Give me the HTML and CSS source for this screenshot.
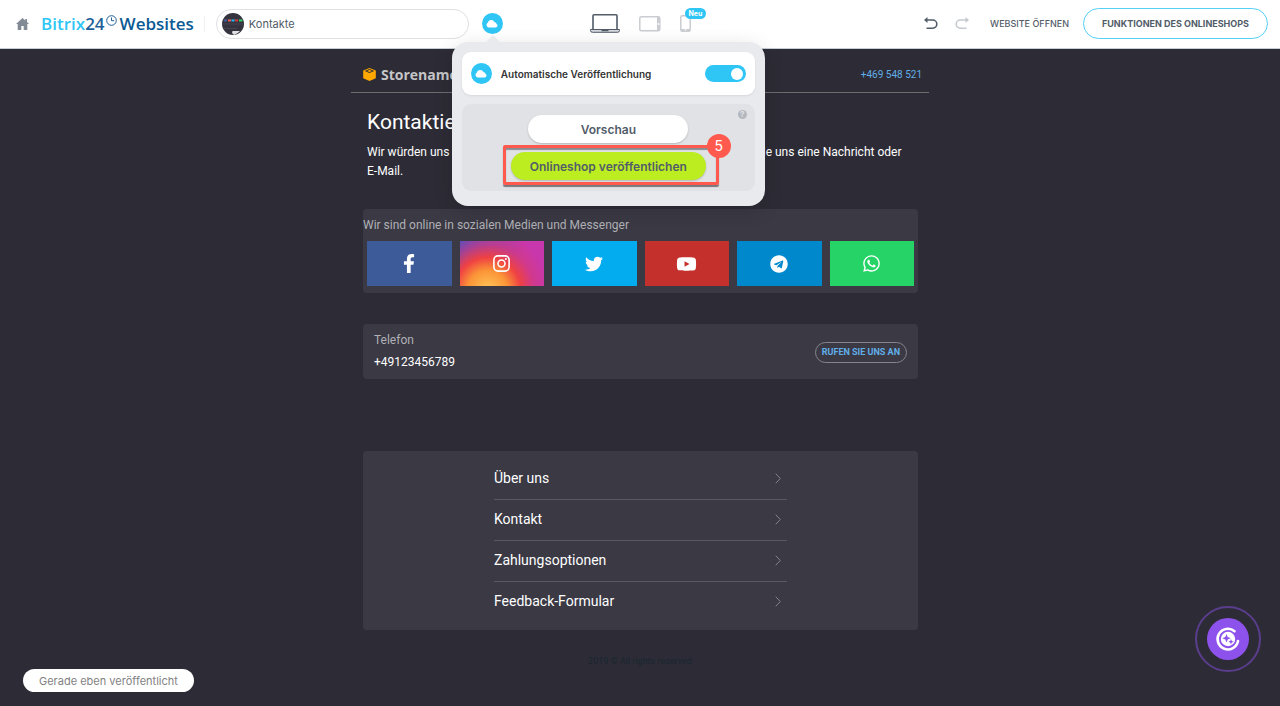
FILE: index.html
```html
<!DOCTYPE html>
<html lang="de">
<head>
  <meta charset="UTF-8">
  <meta name="viewport" content="width=device-width, initial-scale=1">
  <title>Bitrix24 Websites</title>
  <link rel="stylesheet" href="styles.css">
</head>
<body>

  <!-- Editor toolbar -->
  <header class="toolbar">
    <div class="toolbar-left">
      <a href="#" class="home" aria-label="Startseite">
        <svg width="13" height="12" viewBox="0 0 13 12"><path fill="#828b95" d="M6.500 0 0 6h1.700v6h3.600V8h2.400v4h3.600V6H13L11 4.100V1H9.300v1.600z"/></svg>
      </a>
      <a href="#" class="logo">
        <span class="logo-name">Bitrix</span><span class="logo-num">24</span>
        <svg class="logo-clock" width="11" height="11" viewBox="0 0 11 11" fill="none" stroke="#215f98" stroke-width="1"><circle cx="5.500" cy="5.500" r="4.800"/><path d="M5.500 2.500v3.200h2.700"/></svg>
        <span class="logo-product">Websites</span>
      </a>
      <span class="divider"></span>
      <button type="button" class="page-select">
        <svg width="22" height="22" viewBox="0 0 22 22">
          <circle cx="11" cy="11" r="11" fill="#34333e"/>
          <path d="M1 6.500h20M0 11h22M1 15.500h14" stroke="#454450"/>
          <path d="M2 7.500h3" stroke="#3f5a9c" stroke-width="2"/>
          <path d="M6 7.500h3" stroke="#ee5a4f" stroke-width="2"/>
          <path d="M9.500 7.500h3" stroke="#1fb4f3" stroke-width="2"/>
          <path d="M13 7.500h3" stroke="#d23a37" stroke-width="2"/>
          <path d="M17 7.500h3.400" stroke="#2bcf67" stroke-width="2"/>
          <path d="M10.500 18h7.500a11 11 0 0 1-6 3.900l-2-2z" fill="#dfe0e3"/>
        </svg>
        <span>Kontakte</span>
      </button>

      <div class="publish">
        <button type="button" class="cloud" aria-label="Veröffentlichen">
          <svg width="12" height="9" viewBox="0 0 12 9"><path fill="#fff" d="M3 8.500A2.600 2.600 0 0 1 1.700 3.700 3.700 3.700 0 0 1 8.500 2.900 2.400 2.400 0 0 1 10.600 5 1.900 1.900 0 0 1 9.800 8.500z"/></svg>
        </button>

        <!-- Publish popup -->
        <div class="popup">
          <div class="popup-auto">
            <span class="cloud">
              <svg width="12" height="9" viewBox="0 0 12 9"><path fill="#fff" d="M3 8.500A2.600 2.600 0 0 1 1.700 3.700 3.700 3.700 0 0 1 8.500 2.900 2.400 2.400 0 0 1 10.600 5 1.900 1.900 0 0 1 9.800 8.500z"/></svg>
            </span>
            <label for="auto">Automatische Veröffentlichung</label>
            <input type="checkbox" id="auto" class="switch" checked>
          </div>
          <div class="popup-actions">
            <button type="button" class="help" aria-label="Hilfe">?</button>
            <button type="button" class="btn-preview">Vorschau</button>
            <div class="step">
              <button type="button" class="btn-publish">Onlineshop veröffentlichen</button>
              <span class="step-frame"></span>
              <span class="step-number">5</span>
            </div>
          </div>
        </div>
      </div>
    </div>

    <div class="devices">
      <button type="button" aria-label="Desktop">
        <svg width="30" height="19" viewBox="0 0 30 19" fill="none" stroke="#525c69"><path stroke-width="1.600" d="M3 15.500V1.800q0-1 1-1h22q1 0 1 1v13.700"/><path d="M.5 15.500h29v1q0 1.800-2 1.800h-25q-2 0-2-1.800z" fill="#d5d8dc"/><path stroke-width="1.500" d="M11.500 16.500h7"/></svg>
      </button>
      <button type="button" aria-label="Tablet">
        <svg width="22" height="16" viewBox="0 0 22 16"><rect x=".8" y=".8" width="20" height="14" rx="1.500" fill="none" stroke="#c9ccd0" stroke-width="1.500"/><path fill="#c9ccd0" d="M18 1h3v14h-3z"/><circle cx="19.500" cy="8" r="1" fill="#fff"/></svg>
      </button>
      <button type="button" class="device-phone" aria-label="Smartphone">
        <svg width="11" height="17" viewBox="0 0 11 17"><rect x=".8" y=".8" width="9.400" height="15.400" rx="1.500" fill="none" stroke="#c9ccd0" stroke-width="1.500"/><path fill="#c9ccd0" d="M1 14h9v2H1z"/><circle cx="5.500" cy="15" r=".8" fill="#fff"/></svg>
        <span class="badge">Neu</span>
      </button>
    </div>

    <div class="toolbar-right">
      <button type="button" class="undo" aria-label="Rückgängig">
        <svg width="14" height="13" viewBox="0 0 14 13"><path fill="none" stroke="#525c69" stroke-width="1.600" d="M2 3h6.700a3.900 3.900 0 0 1 0 8.200H2.500"/><path fill="#525c69" d="M0 3 3.500 0v6z"/></svg>
      </button>
      <button type="button" class="redo" aria-label="Wiederholen">
        <svg width="14" height="13" viewBox="0 0 14 13"><path fill="none" stroke="#c5c9ce" stroke-width="1.600" d="M12 3H5.300a3.900 3.900 0 0 0 0 8.200h6.200"/><path fill="#c5c9ce" d="M14 3 10.500 0v6z"/></svg>
      </button>
      <a href="#" class="open-site">WEBSITE ÖFFNEN</a>
      <button type="button" class="features">FUNKTIONEN DES ONLINESHOPS</button>
    </div>
  </header>

  <!-- Site preview -->
  <main class="site">
    <div class="site-header">
      <a href="#" class="store">
        <svg width="13" height="13" viewBox="0 0 13 13"><path fill="#ffa900" d="M6.500 0 12.800 2.400v7.800L6.500 13 .2 10.200V2.400z"/><path fill="#2d2c36" d="m6.500 1 4.800 1.900-4.800 2-4.800-2z"/><path fill="#ffa900" d="m6.500 2 2.600.9-2.600 1-2.600-1z"/></svg>
        Storename
      </a>
      <a href="tel:+469548521" class="store-phone">+469 548 521</a>
    </div>

    <section class="intro">
      <h1>Kontaktieren Sie uns</h1>
      <p>Wir würden uns sehr freuen, etwas von Ihnen zu hören. Bitte hinterlassen Sie uns eine Nachricht oder <span class="nowrap">E-Mail.</span></p>
    </section>

    <section class="card social">
      <h2>Wir sind online in sozialen Medien und Messenger</h2>
      <div class="social-links">
        <a href="#" class="facebook" aria-label="Facebook">
          <svg width="12" height="19" viewBox="0 0 320 512"><path d="M279.140 288l14.220-92.660h-88.910v-60.130c0-25.350 12.420-50.060 52.240-50.060h40.420V6.260S260.430 0 225.360 0c-73.220 0-121.080 44.380-121.080 124.720v70.620H22.890V288h81.390v224h100.170V288z"/></svg>
        </a>
        <a href="#" class="instagram" aria-label="Instagram">
          <svg width="17" height="17" viewBox="0 0 17 17"><rect x=".9" y=".9" width="15.200" height="15.200" rx="4" fill="none" stroke="#fff" stroke-width="1.600"/><circle cx="8.500" cy="8.500" r="3.500" fill="none" stroke="#fff" stroke-width="1.600"/><circle cx="12.900" cy="4.100" r="1"/></svg>
        </a>
        <a href="#" class="twitter" aria-label="Twitter">
          <svg width="18" height="18" viewBox="0 0 512 512"><path d="M459.370 151.716c.325 4.548.325 9.097.325 13.645 0 138.720-105.583 298.558-298.558 298.558-59.452 0-114.680-17.219-161.137-47.106 8.447.974 16.568 1.299 25.340 1.299 49.055 0 94.213-16.568 130.274-44.832-46.132-.975-84.792-31.188-98.112-72.772 6.498.974 12.995 1.624 19.818 1.624 9.421 0 18.843-1.300 27.614-3.573-48.081-9.747-84.143-51.980-84.143-102.985v-1.299c13.969 7.797 30.214 12.670 47.431 13.319-28.264-18.843-46.781-51.005-46.781-87.391 0-19.492 5.197-37.360 14.294-52.954 51.655 63.675 129.300 105.258 216.365 109.807-1.624-7.797-2.599-15.918-2.599-24.040 0-57.828 46.782-104.934 104.934-104.934 30.213 0 57.502 12.670 76.670 33.137 23.715-4.548 46.456-13.320 66.599-25.340-7.798 24.366-24.366 44.833-46.132 57.827 21.117-2.273 41.584-8.122 60.426-16.243-14.292 20.791-32.161 39.308-52.628 54.253z"/></svg>
        </a>
        <a href="#" class="youtube" aria-label="YouTube">
          <svg width="21" height="18" viewBox="0 0 576 512"><path d="M549.655 124.083c-6.281-23.650-24.787-42.276-48.284-48.597C458.781 64 288 64 288 64S117.220 64 74.629 75.486c-23.497 6.322-42.003 24.947-48.284 48.597-11.412 42.867-11.412 132.305-11.412 132.305s0 89.438 11.412 132.305c6.281 23.650 24.787 41.500 48.284 47.821C117.220 448 288 448 288 448s170.780 0 213.371-11.486c23.497-6.321 42.003-24.171 48.284-47.821 11.412-42.867 11.412-132.305 11.412-132.305s0-89.438-11.412-132.305zM232 337.600V175.200l142.700 81.200z"/></svg>
        </a>
        <a href="#" class="telegram" aria-label="Telegram">
          <svg width="18" height="18" viewBox="0 0 496 512"><path d="M248 8C111 8 0 119 0 256s111 248 248 248 248-111 248-248S385 8 248 8zm121.800 169.900l-40.700 191.800c-3 13.600-11.100 16.900-22.400 10.500l-62-45.700-29.900 28.800c-3.300 3.300-6.100 6.100-12.500 6.100l4.400-63.100 114.900-103.800c5-4.400-1.100-6.900-7.700-2.500l-142 89.400-61.200-19.100c-13.300-4.200-13.600-13.300 2.800-19.700l239.100-92.200c11.100-4 20.800 2.700 17.200 19.500z"/></svg>
        </a>
        <a href="#" class="whatsapp" aria-label="WhatsApp">
          <svg width="17" height="19" viewBox="0 0 448 512"><path d="M380.900 97.100C339 55.100 283.200 32 223.900 32c-122.400 0-222 99.600-222 222 0 39.100 10.200 77.300 29.600 111L0 480l117.700-30.900c32.400 17.700 68.900 27 106.100 27h.1c122.300 0 224.100-99.600 224.100-222 0-59.300-25.200-115-67.100-157zm-157 341.600c-33.200 0-65.700-8.900-94-25.700l-6.700-4-69.800 18.300L72 359.200l-4.400-7c-18.500-29.400-28.200-63.300-28.200-98.200 0-101.700 82.800-184.500 184.600-184.500 49.300 0 95.600 19.200 130.400 54.100 34.800 34.900 56.200 81.200 56.100 130.500 0 101.800-84.900 184.600-186.600 184.600zm101.200-138.200c-5.500-2.800-32.800-16.200-37.900-18-5.100-1.900-8.800-2.800-12.500 2.800-3.700 5.600-14.300 18-17.600 21.800-3.200 3.700-6.500 4.200-12 1.400-32.600-16.300-54-29.100-75.500-66-5.700-9.800 5.700-9.100 16.300-30.300 1.800-3.700.9-6.900-.5-9.700-1.400-2.800-12.500-30.100-17.100-41.200-4.500-10.800-9.100-9.300-12.500-9.500-3.200-.2-6.900-.2-10.600-.2-3.700 0-9.700 1.400-14.800 6.900-5.100 5.600-19.400 19-19.400 46.300 0 27.300 19.900 53.700 22.600 57.400 2.800 3.700 39.100 59.700 94.800 83.800 35.200 15.200 49 16.500 66.600 13.900 10.700-1.600 32.800-13.400 37.400-26.400 4.600-13 4.600-24.100 3.200-26.400-1.300-2.500-5-3.900-10.500-6.600z"/></svg>
        </a>
      </div>
    </section>

    <section class="card contact">
      <div>
        <h2>Telefon</h2>
        <p>+49123456789</p>
      </div>
      <a href="tel:+49123456789" class="call">RUFEN SIE UNS AN</a>
    </section>

    <nav class="card menu">
      <ul>
        <li><a href="#">Über uns <svg width="6" height="11" viewBox="0 0 6 11"><path d="m.7.7 4.600 4.800L.7 10.300"/></svg></a></li>
        <li><a href="#">Kontakt <svg width="6" height="11" viewBox="0 0 6 11"><path d="m.7.7 4.600 4.800L.7 10.300"/></svg></a></li>
        <li><a href="#">Zahlungsoptionen <svg width="6" height="11" viewBox="0 0 6 11"><path d="m.7.7 4.600 4.800L.7 10.300"/></svg></a></li>
        <li><a href="#">Feedback-Formular <svg width="6" height="11" viewBox="0 0 6 11"><path d="m.7.7 4.600 4.800L.7 10.300"/></svg></a></li>
      </ul>
    </nav>

    <footer class="copyright">2019 © All rights reserved</footer>
  </main>

  <div class="status">Gerade eben veröffentlicht</div>

  <button type="button" class="copilot" aria-label="CoPilot">
    <svg width="42" height="42" viewBox="0 0 42 42">
      <circle cx="21" cy="21" r="21" fill="#8e52ec"/>
      <path fill="none" stroke="#fff" stroke-width="2.600" stroke-linecap="round" d="M27.500 13.200A10.300 10.300 0 1 0 31 23"/>
      <circle cx="21" cy="21" r="7.200" fill="#fff"/>
      <path fill="#8e52ec" d="m19.500 16 1.200 3 3 1.200-3 1.200-1.200 3-1.200-3-3-1.200 3-1.200zM24 21l.8 2 2 .8-2 .8-.8 2-.8-2-2-.8 2-.8z"/>
    </svg>
  </button>

</body>
</html>
```
FILE: styles.css
```css
* {
  box-sizing: border-box;
}

body {
  margin: 0;
  min-height: 100vh;
  background-color: #2d2c36;
  font-family: Roboto, "Liberation Sans", sans-serif;
  color: #fff;
}

h1, h2, p, ul {
  margin: 0;
  padding: 0;
  font-weight: 400;
}

a {
  color: inherit;
  text-decoration: none;
}

button {
  margin: 0;
  padding: 0;
  border: none;
  background: none;
  font-family: inherit;
  cursor: pointer;
}

svg {
  display: block;
  flex: none;
}

.nowrap {
  white-space: nowrap;
}

/* Toolbar */
.toolbar {
  position: relative;
  z-index: 2;
  display: grid;
  grid-template-columns: 1fr auto 1fr;
  align-items: center;
  height: 49px;
  padding: 0 12px 1px;
  background-color: #fff;
  border-bottom: 1px solid #c6cdd3;
  font-family: Inter, "Liberation Sans", sans-serif;
  color: #525c69;
}

.toolbar-left {
  display: flex;
  align-items: center;
  padding-left: 4px;
}

.logo {
  display: flex;
  align-items: center;
  margin: 0 10px 0 12px;
  font-family: "Open Sans", sans-serif;
  font-size: 17px;
  line-height: 24px;
  font-weight: 600;
  color: #0b5a94;
}

.logo-name {
  color: #2fc6f6;
}

.logo-num {
  color: #215f98;
}

.logo-clock {
  margin: 0 3px 6px 1px;
}

.divider {
  width: 1px;
  height: 16px;
  margin-right: 11px;
  background-color: #eef0f2;
}

.page-select {
  display: flex;
  align-items: center;
  gap: 5px;
  width: 253px;
  height: 30px;
  padding: 0 5px;
  border: 1px solid #dfe0e3;
  border-radius: 15px;
  font-size: 11px;
  color: #525c69;
}

.publish {
  position: relative;
  margin-left: 13px;
}

.cloud {
  display: flex;
  align-items: center;
  justify-content: center;
  width: 21px;
  height: 21px;
  border-radius: 50%;
  background-color: #2fc6f6;
}

/* Publish popup */
.popup {
  position: absolute;
  top: 29px;
  left: -30px;
  display: flex;
  flex-direction: column;
  gap: 9px;
  width: 313px;
  padding: 10px 10px 15px;
  border-radius: 16px;
  background-color: #e8eaee;
  box-shadow: 0 5px 20px rgba(0, 0, 0, 0.14);
}

.popup::before {
  content: "";
  position: absolute;
  top: -7px;
  left: 33px;
  border: 8px solid transparent;
  border-top: none;
  border-bottom-color: #e8eaee;
}

.popup-auto {
  display: flex;
  align-items: center;
  gap: 9px;
  height: 43px;
  padding: 0 9px;
  border-radius: 9px;
  background-color: #fff;
  box-shadow: 0 1px 2px rgba(0, 0, 0, 0.08);
  font-size: 10px;
  font-weight: 600;
  color: #333;
}

.switch {
  appearance: none;
  display: flex;
  justify-content: flex-end;
  align-items: center;
  width: 41px;
  height: 17px;
  margin: 0 0 0 auto;
  padding: 0 3px;
  border-radius: 9px;
  background-color: #2fc6f6;
}

.switch::before {
  content: "";
  width: 12px;
  height: 12px;
  border-radius: 50%;
  background-color: #fff;
}

.switch:not(:checked) {
  justify-content: flex-start;
  background-color: #c6cdd3;
}

.popup-actions {
  position: relative;
  display: flex;
  flex-direction: column;
  align-items: center;
  gap: 9px;
  padding: 11px 0;
  border-radius: 9px;
  background-color: #e0e2e6;
}

.help {
  position: absolute;
  top: 6px;
  right: 8px;
  width: 9px;
  height: 9px;
  border-radius: 50%;
  background-color: #b4b8be;
  font-size: 8px;
  line-height: 9px;
  font-weight: 700;
  color: #e0e2e6;
}

.btn-preview,
.btn-publish {
  height: 28px;
  border-radius: 14px;
  box-shadow: 0 1px 2px rgba(0, 0, 0, 0.2);
  font-size: 12px;
  font-weight: 600;
  color: #525c69;
}

.btn-preview {
  width: 160px;
  background-color: #fff;
}

.btn-publish {
  display: block;
  width: 195px;
  background-color: #bbed21;
}

/* Marked step */
.step {
  position: relative;
}

.step-frame {
  position: absolute;
  top: -7px;
  right: -13px;
  bottom: -5px;
  left: -8px;
  border: 3px solid #ff5a4d;
  border-radius: 2px;
  box-shadow: 0 2px 1px #77777c, inset 0 2px 1px #8b8c91;
  pointer-events: none;
}

.step-number {
  position: absolute;
  top: -18px;
  right: -25px;
  width: 24px;
  height: 24px;
  border-radius: 50%;
  background-color: #ff5a4d;
  font-size: 14px;
  line-height: 24px;
  text-align: center;
  color: #fff;
}

/* Device switch */
.devices {
  display: flex;
  align-items: center;
  gap: 19px;
}

.device-phone {
  position: relative;
}

.badge {
  position: absolute;
  top: -7px;
  left: 5px;
  padding: 0 4px;
  border-radius: 6px;
  background-color: #2fc6f6;
  font-size: 7px;
  line-height: 11px;
  font-weight: 700;
  color: #fff;
}

.toolbar-right {
  display: flex;
  align-items: center;
  justify-content: flex-end;
}

.redo {
  margin: 0 21px 0 17px;
}

.open-site {
  margin-right: 14px;
  font-size: 9px;
  font-weight: 500;
}

.features {
  height: 31px;
  padding: 0 18px;
  border: 1px solid #55d0f7;
  border-radius: 16px;
  font-size: 9px;
  font-weight: 700;
  color: #525c69;
}

/* Site preview */
.site {
  max-width: 578px;
  margin: 0 auto;
}

.site-header {
  display: flex;
  align-items: center;
  justify-content: space-between;
  height: 44px;
  padding: 8px 7px 0 12px;
  border-bottom: 1px solid #6b6b70;
}

.store {
  display: flex;
  align-items: center;
  gap: 5px;
  font-family: "Open Sans", sans-serif;
  font-size: 14px;
  font-weight: 700;
  color: #c5c5c8;
}

.store-phone {
  font-size: 10px;
  color: #62aee8;
}

.intro {
  padding: 17px 16px 28px;
}

.intro h1 {
  margin-bottom: 8px;
  font-size: 21px;
  line-height: 25px;
}

.intro p {
  font-size: 12px;
  line-height: 19px;
}

.card {
  margin: 0 11px 0 12px;
  border-radius: 4px;
  background-color: #3a3944;
}

.card h2 {
  font-size: 12px;
  line-height: 16px;
  color: #b0b0b5;
}

.social {
  padding: 8px 0 7px;
}

.social-links {
  display: grid;
  grid-template-columns: repeat(6, 1fr);
  gap: 8px;
  padding: 8px 4px 0;
}

.social-links a {
  display: flex;
  align-items: center;
  justify-content: center;
  height: 45px;
  fill: #fff;
}

.facebook {
  background-color: #3d5b99;
}

.instagram {
  background: radial-gradient(circle at 33% 110%, #ffc859 0, #fb9537 20px, #ef4143 33px, rgba(214, 58, 120, 0.6) 46px, transparent 60px), linear-gradient(90deg, #4a4fc4, #c837ab 75%);
}

.twitter {
  background-color: #03acee;
}

.youtube {
  background-color: #c4302b;
}

.telegram {
  background-color: #0088cc;
}

.whatsapp {
  background-color: #25d366;
}

.contact {
  display: flex;
  align-items: center;
  justify-content: space-between;
  margin-top: 31px;
  padding: 8px 11px 7px;
}

.contact p {
  margin-top: 5px;
  font-size: 12px;
  line-height: 19px;
}

.call {
  padding: 0 6px;
  border: 1px solid #85858b;
  border-radius: 11px;
  font-size: 9px;
  line-height: 19px;
  font-weight: 700;
  color: #62aee8;
}

.menu {
  margin-top: 72px;
  padding: 8px 0;
}

.menu ul {
  max-width: 293px;
  margin: 0 auto;
  list-style: none;
}

.menu li + li {
  border-top: 1px solid #5a5963;
}

.menu a {
  display: flex;
  align-items: center;
  justify-content: space-between;
  padding: 9px 6px 11px 0;
  font-size: 14px;
  line-height: 20px;
}

.menu svg {
  fill: none;
  stroke: #85848d;
}

.copyright {
  padding: 25px 0;
  font-size: 9px;
  line-height: 12px;
  text-align: center;
  color: #18262f;
}

.status {
  position: fixed;
  bottom: 14px;
  left: 23px;
  padding: 1px 16px 0;
  border-radius: 12px;
  background-color: #fff;
  font-family: Inter, "Liberation Sans", sans-serif;
  font-size: 11px;
  line-height: 22px;
  color: #828282;
}

.copilot {
  position: fixed;
  right: 19px;
  bottom: 34px;
  display: flex;
  align-items: center;
  justify-content: center;
  width: 66px;
  height: 66px;
  border: 2px solid #5a3d8c;
  border-radius: 50%;
}
```
